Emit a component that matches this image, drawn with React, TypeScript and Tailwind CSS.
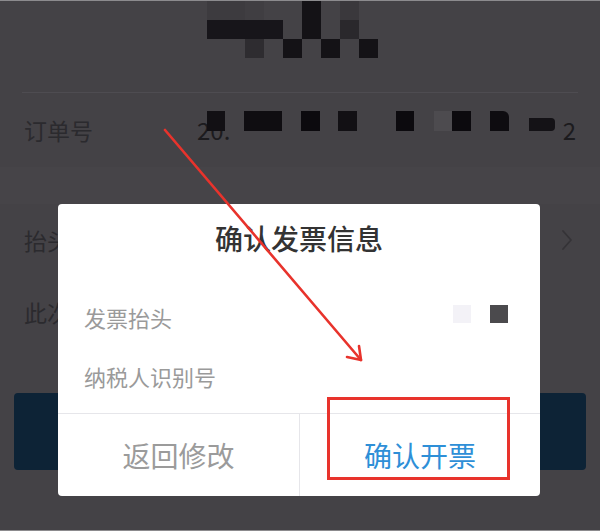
const topMosaic: string[][] = [
  ['bg-[#3d3b3f]', 'bg-[#3d3b3f]', 'bg-[#403e42]', '', '', 'bg-[#141216]', '', 'bg-[#3a383c]', ''],
  ['bg-[#17151a]', 'bg-[#17151a]', 'bg-[#17151a]', 'bg-[#17151a]', '', 'bg-[#141216]', '', 'bg-[#2a282c]', ''],
  ['', '', 'bg-[#2e2c30]', '', 'bg-[#141216]', '', 'bg-[#141216]', '', 'bg-[#141216]'],
];

function Chevron() {
  return (
    <svg width="12" height="22" viewBox="0 0 12 22" fill="none">
      <path d="M2 2l8 9-8 9" stroke="#353337" strokeWidth="1.8" strokeLinecap="round" strokeLinejoin="round" />
    </svg>
  );
}

export default function App() {
  return (
    <div className="relative w-[600px] h-[531px] overflow-hidden bg-[#444246] border-y border-[#8c8b8e] font-['Noto_Sans_CJK_SC',sans-serif]">
      {/* 顶部 (打码) */}
      <div className="h-[91px] pl-[207px]">
        <div className="grid grid-cols-[repeat(9,19px)] grid-rows-[repeat(3,19px)]">
          {topMosaic.flat().map((c, i) => (
            <div key={i} className={c} />
          ))}
        </div>
      </div>
      <div className="mx-[22px] h-px bg-[#4e4c51]" />

      {/* 订单号 */}
      <div className="h-[74px] flex items-center px-[24px]">
        <span className="w-[173px] text-[23px] text-[#2b2a2e]">订单号</span>
        <div className="relative flex-1 h-full flex items-center justify-between text-[24px] text-[#1c1b1e]">
          <span>20.</span>
          <span>2</span>
          <div className="absolute left-[10px] top-[18px] w-[18px] h-[20px] bg-[#121014]" />
          <div className="absolute left-[47px] top-[18px] w-[38px] h-[20px] bg-[#0f0d11]" />
          <div className="absolute left-[104px] top-[18px] w-[19px] h-[20px] bg-[#0c0a0e]" />
          <div className="absolute left-[141px] top-[18px] w-[19px] h-[20px] bg-[#121014]" />
          <div className="absolute left-[199px] top-[18px] w-[18px] h-[20px] bg-[#0c0a0e]" />
          <div className="absolute left-[237px] top-[18px] w-[18px] h-[20px] bg-[#4d4b4f]" />
          <div className="absolute left-[255px] top-[18px] w-[19px] h-[20px] bg-[#0c0a0e]" />
          <div className="absolute left-[293px] top-[18px] w-[19px] h-[20px] bg-[#0e0c10] rounded-tr-[6px]" />
          <div className="absolute left-[332px] top-[25px] w-[26px] h-[13px] bg-[#141216] rounded-r-[4px]" />
        </div>
      </div>

      <div className="h-[37px] bg-[#464448]" />

      {/* 抬头 */}
      <div className="h-[72px] flex items-center justify-between pl-[24px] pr-[27px]">
        <span className="text-[23px] text-[#2b2a2e]">抬头</span>
        <Chevron />
      </div>
      {/* 此次 */}
      <div className="h-[72px] flex items-center pl-[24px]">
        <span className="text-[23px] text-[#2b2a2e]">此次</span>
      </div>

      {/* 提交按钮 */}
      <div className="mx-[14px] mt-[45px] h-[77px] rounded-[4px] bg-[#0d2336]" />

      {/* 弹窗 */}
      <div className="absolute left-[58px] top-[203px] w-[482px] h-[292px] bg-white rounded-[4px] flex flex-col">
        <div className="h-[68px] flex items-center justify-center text-[28px] font-medium text-[#333333]">
          确认发票信息
        </div>
        <div className="h-[16px]" />
        <div className="h-[59px] flex items-center justify-between pl-[26px] pr-[32px]">
          <span className="text-[22px] text-[#9a9a9a]">发票抬头</span>
          <div className="flex items-center gap-[19px] -mt-[8px]">
            <div className="w-[18px] h-[18px] bg-[#f3f2f7]" />
            <div className="w-[18px] h-[18px] bg-[#4b4a4d]" />
          </div>
        </div>
        <div className="h-[59px] flex items-center pl-[26px]">
          <span className="text-[22px] text-[#9a9a9a]">纳税人识别号</span>
        </div>
        <div className="h-[7px]" />
        <div className="h-px bg-[#e6e6ea]" />
        <div className="flex-1 flex">
          <div className="w-[241px] flex items-center justify-center text-[28px] text-[#9b9b9b]">返回修改</div>
          <div className="flex-1 border-l border-[#e6e6ea] flex items-center justify-center text-[28px] text-[#2e8fd7]">
            确认开票
          </div>
        </div>
      </div>

      {/* 标注 */}
      <div className="absolute left-[327px] top-[396px] w-[183px] h-[83px] border-[3px] border-[#e8332c]" />
      <svg className="absolute left-0 top-0 pointer-events-none" width="600" height="529" viewBox="0 0 600 529">
        <line x1="165" y1="129" x2="361" y2="359" stroke="#e8332c" strokeWidth="2.6" strokeLinecap="round" />
        <polyline points="347,356 361,359 359,345" fill="none" stroke="#e8332c" strokeWidth="2.6" strokeLinecap="round" strokeLinejoin="round" />
      </svg>
    </div>
  );
}
